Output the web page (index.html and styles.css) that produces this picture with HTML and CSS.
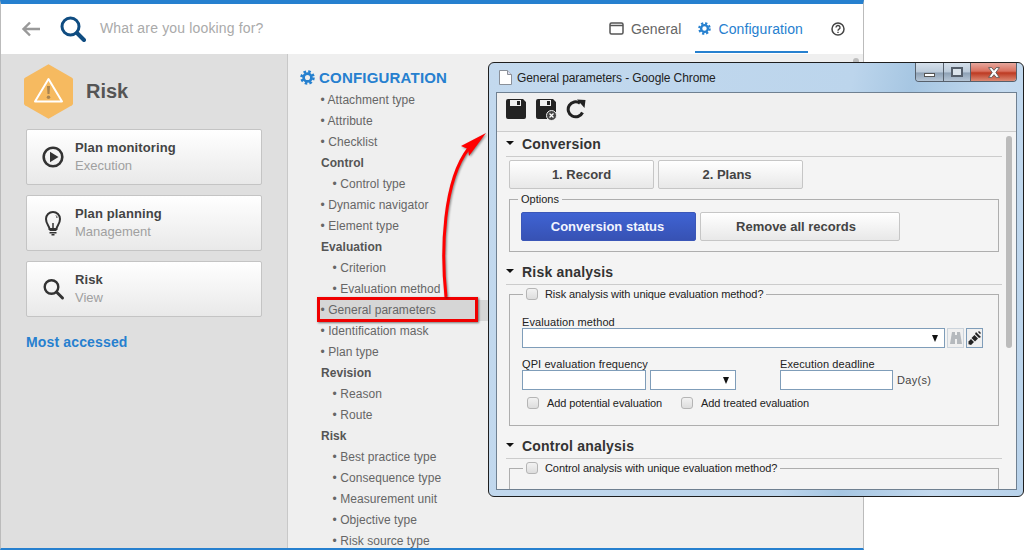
FILE: index.html
```html
<!DOCTYPE html>
<html lang="en">

<head>
    <meta charset="UTF-8">
    <title>General parameters</title>
    <link rel="stylesheet" href="styles.css">
</head>

<body>
    <svg class="defs" width="0" height="0">
        <symbol id="gear" viewBox="0 0 20 20">
            <circle cx="10" cy="10" r="5.2" fill="none" stroke="currentColor" stroke-width="3.6" />
            <circle cx="10" cy="10" r="8" fill="none" stroke="currentColor" stroke-width="3.4" stroke-dasharray="3.4 2.88" />
        </symbol>
        <symbol id="floppy" viewBox="0 0 20 20">
            <path fill="#222" fill-rule="evenodd" d="M2 0h15l3 3v15a2 2 0 0 1-2 2H2a2 2 0 0 1-2-2V2a2 2 0 0 1 2-2zM4 1v6h11V1zM11 2h3v4h-3z" />
        </symbol>
    </svg>

    <div class="app">
        <header class="topbar">
            <svg class="back-icon" width="20" height="16" viewBox="0 0 20 16">
                <path d="M19 8H3M9 1.5L2.5 8 9 14.500" fill="none" stroke="#999" stroke-width="2.4" />
            </svg>
            <svg class="search-icon" width="26" height="26" viewBox="0 0 26 26">
                <circle cx="10.500" cy="10.500" r="8.500" fill="none" stroke="#0f4c81" stroke-width="3" />
                <path d="M17 17l7 7" stroke="#0f4c81" stroke-width="4" stroke-linecap="round" />
            </svg>
            <span class="search-text">What are you looking for?</span>
            <nav class="tabs">
                <a class="tab">
                    <svg width="15" height="13" viewBox="0 0 15 13">
                        <rect x="1" y="1" width="13" height="11" rx="1.500" fill="none" stroke="#555" stroke-width="1.500" />
                        <path d="M1 3.500h13" stroke="#555" stroke-width="1.500" />
                    </svg>
                    General
                </a>
                <a class="tab tab-active">
                    <svg width="13" height="13"><use href="#gear" /></svg>
                    Configuration
                </a>
            </nav>
            <svg class="help-icon" width="14" height="14" viewBox="0 0 14 14">
                <circle cx="7" cy="7" r="6" fill="none" stroke="#444" stroke-width="1.500" />
                <path d="M5 5.500a2 2 0 1 1 3 1.700c-.7.400-1 .7-1 1.500" fill="none" stroke="#444" stroke-width="1.400" />
                <path d="M6.300 9.700h1.400v1.400H6.300z" fill="#444" />
            </svg>
        </header>

        <div class="main">
            <aside class="sidebar">
                <div class="module">
                    <svg width="50" height="55" viewBox="0 0 50 55">
                        <path d="M24.500.300L48 13.800a2 2 0 0 1 1 1.700v24a2 2 0 0 1-1 1.700L24.500 54.700 1 41.200a2 2 0 0 1-1-1.700v-24a2 2 0 0 1 1-1.700z" fill="#f6ba60" />
                        <path d="M24.500 15L38 37.500H11z" fill="none" stroke="#fff" stroke-width="2" stroke-linejoin="round" />
                        <path d="M23 22h3l-.5 8h-2z" fill="#a98450" />
                        <circle cx="24.500" cy="33.200" r="1.800" fill="#a98450" />
                    </svg>
                    <span class="module-name">Risk</span>
                </div>

                <a class="card">
                    <svg width="24" height="24" viewBox="0 0 24 24">
                        <circle cx="12" cy="12" r="9.300" fill="none" stroke="#333" stroke-width="2.600" />
                        <path d="M9 6.800L17.500 12 9 17.200z" fill="#333" />
                    </svg>
                    <span class="card-text"><b>Plan monitoring</b><small>Execution</small></span>
                </a>
                <a class="card">
                    <svg width="24" height="28" viewBox="0 0 24 28">
                        <path d="M8.500 20c0-3-3.500-4.500-3.500-10a7 7 0 0 1 14 0c0 5.500-3.500 7-3.500 10z" fill="none" stroke="#333" stroke-width="2" />
                        <path d="M12 20v-6" stroke="#333" stroke-width="1.500" />
                        <path d="M15 6.500a3 3 0 0 1 1 2.500" fill="none" stroke="#333" />
                        <path d="M8.500 20.500h7v1.500h-7zM8.500 23h7v1.500h-7zM10.500 25h3v1.500h-3z" fill="#333" />
                    </svg>
                    <span class="card-text"><b>Plan planning</b><small>Management</small></span>
                </a>
                <a class="card">
                    <svg width="24" height="24" viewBox="0 0 24 24">
                        <circle cx="10.500" cy="10" r="6.800" fill="none" stroke="#333" stroke-width="2.400" />
                        <path d="M15.500 15l6 6" stroke="#333" stroke-width="3" stroke-linecap="round" />
                    </svg>
                    <span class="card-text"><b>Risk</b><small>View</small></span>
                </a>

                <a class="most-accessed">Most accessed</a>
            </aside>

            <section class="content">
                <h1 class="content-title">
                    <svg width="15" height="15"><use href="#gear" /></svg>
                    CONFIGURATION
                </h1>
                <ul class="menu">
                    <li>• Attachment type</li>
                    <li>• Attribute</li>
                    <li>• Checklist</li>
                    <li class="group">Control</li>
                    <li class="sub">• Control type</li>
                    <li>• Dynamic navigator</li>
                    <li>• Element type</li>
                    <li class="group">Evaluation</li>
                    <li class="sub">• Criterion</li>
                    <li class="sub">• Evaluation method</li>
                    <li class="selected">• General parameters</li>
                    <li>• Identification mask</li>
                    <li>• Plan type</li>
                    <li class="group">Revision</li>
                    <li class="sub">• Reason</li>
                    <li class="sub">• Route</li>
                    <li class="group">Risk</li>
                    <li class="sub">• Best practice type</li>
                    <li class="sub">• Consequence type</li>
                    <li class="sub">• Measurement unit</li>
                    <li class="sub">• Objective type</li>
                    <li class="sub">• Risk source type</li>
                </ul>
                <div class="scroll-thumb"></div>
            </section>
        </div>
    </div>

    <!-- annotations drawn over the screenshot -->
    <div class="callout-box"></div>
    <svg class="callout-arrow" width="60" height="180" viewBox="0 0 60 180">
        <path d="M7 171C2 125 4 55 30 22" fill="none" stroke="#f00" stroke-width="3" />
        <path d="M47 7L22 20l7 3 1 7z" fill="#f00" />
    </svg>

    <div class="dialog">
        <div class="titlebar">
            <svg width="13" height="15" viewBox="0 0 13 15">
                <path d="M.5.500h8l4 4v10H.500z" fill="#fff" stroke="#8a9099" />
                <path d="M8.500.500v4h4" fill="#dde" stroke="#8a9099" />
            </svg>
            <span class="titlebar-text">General parameters - Google Chrome</span>
            <div class="win-buttons">
                <span class="win-btn win-min"><i></i></span>
                <span class="win-btn win-max"><i></i></span>
                <span class="win-btn win-close">
                    <svg width="16" height="13" viewBox="0 0 14 12">
                        <path d="M2 1.500h3L7 4l2-2.500h3L8.700 6 12 10.500H9L7 8l-2 2.500H2L5.300 6z" fill="#fff" stroke="#555" stroke-width=".8" />
                    </svg>
                </span>
            </div>
        </div>

        <div class="client">
            <div class="toolbar">
                <svg width="20" height="20"><use href="#floppy" /></svg>
                <span class="save-close">
                    <svg width="20" height="20"><use href="#floppy" /></svg>
                    <svg class="save-badge" width="11" height="11" viewBox="0 0 11 11">
                        <circle cx="5.500" cy="5.500" r="5" fill="#444" stroke="#f0f0f0" />
                        <path d="M3.500 3.500l4 4M7.500 3.500l-4 4" stroke="#fff" stroke-width="1.300" />
                    </svg>
                </span>
                <svg width="20" height="20" viewBox="0 0 20 20">
                    <path d="M16.500 13.500A7.500 7.500 0 1 1 14 4.200" fill="none" stroke="#222" stroke-width="3" />
                    <path d="M11 .500L19.500 1l-1 8z" fill="#222" />
                </svg>
            </div>

            <div class="form">
                <div class="section-head"><i class="caret"></i>Conversion</div>
                <div class="step-row">
                    <button class="btn step">1. Record</button>
                    <button class="btn step step-plans">2. Plans</button>
                </div>
                <fieldset class="box">
                    <legend>Options</legend>
                    <div class="option-row">
                        <button class="btn btn-primary">Conversion status</button>
                        <button class="btn btn-wide">Remove all records</button>
                    </div>
                </fieldset>

                <div class="section-head"><i class="caret"></i>Risk analysis</div>
                <fieldset class="box box-tall">
                    <legend class="legend-check"><i class="check"></i>Risk analysis with unique evaluation method?</legend>
                    <label class="field-label">Evaluation method</label>
                    <div class="method-row">
                        <div class="input input-method"><i class="select-arrow"></i></div>
                        <span class="tool-btn tool-off">
                            <svg width="14" height="14" viewBox="0 0 14 14">
                                <path d="M3 1h3v3h2V1h3l2 12H8V8H6v5H1z" fill="#b5b9bd" />
                            </svg>
                        </span>
                        <span class="tool-btn">
                            <svg width="15" height="15" viewBox="0 0 15 15">
                                <path d="M9 1l5 5-2 1-4-4z" fill="#222" />
                                <path d="M7.500 4l3.500 3.500-3 3-3.500-3.500z" fill="#222" />
                                <path d="M4 8l3 3-3 3-3-1 1-1-1-1z" fill="#222" />
                                <path d="M11 1l1-1 2 2-1 1z" fill="#222" />
                            </svg>
                        </span>
                    </div>
                    <div class="freq-row">
                        <div class="freq-col">
                            <label class="field-label">QPI evaluation frequency</label>
                            <div class="freq-inputs">
                                <div class="input input-freq"></div>
                                <div class="input input-unit"><i class="select-arrow"></i></div>
                            </div>
                        </div>
                        <div class="freq-col">
                            <label class="field-label">Execution deadline</label>
                            <div class="deadline">
                                <div class="input input-deadline"></div>
                                <span class="days">Day(s)</span>
                            </div>
                        </div>
                    </div>
                    <div class="check-row">
                        <span class="check-item"><i class="check"></i>Add potential evaluation</span>
                        <span class="check-item"><i class="check"></i>Add treated evaluation</span>
                    </div>
                </fieldset>

                <div class="section-head"><i class="caret"></i>Control analysis</div>
                <fieldset class="box box-tall">
                    <legend class="legend-check"><i class="check"></i>Control analysis with unique evaluation method?</legend>
                </fieldset>

                <div class="form-scroll"></div>
            </div>
        </div>
    </div>
</body>

</html>
```

FILE: styles.css
```css
:root {
    --blue: #2680cf;
    --text-gray: #666666;
    --win-text: #222222;
    --field-border: #7f9db9;
}

* {
    box-sizing: border-box;
}

html,
body {
    height: 100%;
}

body {
    margin: 0;
    background-color: #ffffff;
    font-family: 'Liberation Sans', Arial, sans-serif;
    overflow: hidden;
    position: relative;
}

.defs {
    position: absolute;
}

.app {
    width: 864px;
    height: 550px;
    display: flex;
    flex-direction: column;
    border-top: 4px solid var(--blue);
    border-bottom: 2px solid var(--blue);
    border-left: 1px solid #bbbbbb;
    border-right: 1px solid #bbbbbb;
}

/* top bar */
.topbar {
    height: 50px;
    flex: none;
    display: flex;
    align-items: center;
    background-color: #ffffff;
}

.back-icon {
    margin-left: 20px;
}

.search-icon {
    margin-left: 19px;
}

.search-text {
    margin: 0 0 2px 14px;
    font-size: 14px;
    letter-spacing: 0.16px;
    color: #aaaaaa;
}

.tabs {
    display: flex;
    margin-left: auto;
    height: 100%;
}

.tab {
    display: flex;
    align-items: center;
    gap: 7px;
    height: 49px;
    padding: 0 5px 0 3px;
    font-size: 14px;
    letter-spacing: 0.1px;
    color: #666666;
    margin-left: 9px;
}

.tab-active {
    padding-top: 2px;
    color: var(--blue);
    border-bottom: 2px solid var(--blue);
}

.help-icon {
    margin-left: 23px;
    margin-right: 18px;
}

.main {
    flex: 1;
    display: flex;
    min-height: 0;
}

/* left column */
.sidebar {
    width: 287px;
    flex: none;
    padding: 10px 0 0 25px;
    background-color: #dfdfdf;
    border-right: 1px solid #c8c8c8;
}

.module {
    display: flex;
    align-items: center;
    margin-left: -2px;
    height: 55px;
    gap: 12px;
    margin-bottom: 10px;
}

.module-name {
    font-size: 20px;
    font-weight: bold;
    color: #555555;
}

.card {
    display: flex;
    align-items: center;
    width: 236px;
    height: 56px;
    margin-bottom: 10px;
    padding-left: 14px;
    gap: 10px;
    background: linear-gradient(#ffffff, #e9e9e9);
    border: 1px solid #c4c4c4;
    border-radius: 2px;
}

.card svg {
    flex: none;
}

.card-text {
    display: flex;
    flex-direction: column;
    gap: 3px;
    padding-bottom: 2px;
}

.card-text b {
    font-size: 13px;
    letter-spacing: 0.13px;
    color: #444444;
}

.card-text small {
    font-size: 13px;
    color: #a0a0a0;
}

.most-accessed {
    display: block;
    margin-top: 17px;
    font-size: 14px;
    font-weight: bold;
    letter-spacing: 0.15px;
    color: var(--blue);
}

/* configuration list */
.content {
    flex: 1;
    min-width: 0;
    overflow: hidden;
    background-color: #efefef;
    position: relative;
    padding-top: 14px;
}

.content-title {
    display: flex;
    align-items: center;
    gap: 4px;
    height: 18px;
    margin: 0 0 4px 12px;
    font-size: 15px;
    font-weight: bold;
    letter-spacing: 0.2px;
    color: var(--blue);
}

.menu {
    list-style: none;
    margin: 0;
    padding: 0 0 0 29px;
}

.menu li {
    height: 21px;
    line-height: 21px;
    margin-left: 3.6px;
    font-size: 12px;
    letter-spacing: 0.05px;
    color: var(--text-gray);
}

.menu .group {
    margin-left: 4px;
    font-weight: bold;
    color: #555555;
}

.menu .sub {
    padding-left: 12px;
}

.menu .selected {
    margin-left: 0;
    padding-left: 3.6px;
    background-color: #d6d6d6;
}

.scroll-thumb {
    position: absolute;
    right: 4px;
    top: 4px;
    width: 6px;
    height: 140px;
    border-radius: 3px;
    background-color: #bdbdbd;
}

/* red annotation */
.callout-box {
    position: absolute;
    left: 317px;
    top: 297px;
    width: 161px;
    height: 25px;
    border: 3px solid #f00000;
    box-shadow: 1px 1px 2px rgba(0, 0, 0, 0.5);
}

.callout-arrow {
    position: absolute;
    left: 439px;
    top: 126px;
    filter: drop-shadow(1px 1px 1px rgba(0, 0, 0, 0.45));
}

/* popup window */
.dialog {
    position: absolute;
    left: 488px;
    top: 62px;
    width: 536px;
    height: 435px;
    display: flex;
    flex-direction: column;
    padding: 0 6px 6px 7px;
    border: 1px solid #1e1e1e;
    border-radius: 6px;
    background: linear-gradient(100deg, #c3d9ee 0%, #bcd5ec 60%, #a6c6e2 70%, #c4daef 85%, #b8d2ea 100%);
}

.titlebar {
    height: 29px;
    flex: none;
    display: flex;
    align-items: center;
    padding-left: 3px;
    gap: 5px;
}

.titlebar-text {
    font-size: 12px;
    letter-spacing: -0.1px;
    color: var(--win-text);
    margin-top: 1px;
}

.win-buttons {
    display: flex;
    align-self: flex-start;
    margin-left: auto;
    height: 19px;
    border: 1px solid #56606c;
    border-top: none;
    border-radius: 0 0 4px 4px;
    overflow: hidden;
}

.win-btn {
    display: flex;
    align-items: center;
    justify-content: center;
    height: 100%;
    background: linear-gradient(#d5e0eb 0%, #bccbda 50%, #8ea1b5 55%, #b6c6d6 100%);
    border-right: 1px solid #56606c;
}

.win-min {
    width: 28px;
}

.win-min i {
    width: 11px;
    height: 4px;
    margin-top: 5px;
    background-color: #ffffff;
    border: 1px solid #555555;
}

.win-max {
    width: 27px;
}

.win-max i {
    width: 12px;
    height: 10px;
    background-color: #dbe4ec;
    border: 2px solid #555f6b;
}

.win-close {
    width: 45px;
    border-right: none;
    background: linear-gradient(#e6a79d 0%, #d9715f 45%, #bd3a22 55%, #dc8a74 100%);
}

.client {
    flex: 1;
    display: flex;
    flex-direction: column;
    min-height: 0;
    border: 1px solid #6f8091;
    background-color: #f4f4f4;
    overflow: hidden;
}

.toolbar {
    height: 39px;
    flex: none;
    display: flex;
    align-items: center;
    gap: 10px;
    padding: 0 0 7px 9px;
    background-color: #f0f0f0;
    border-bottom: 1px solid #cccccc;
}

.save-close {
    position: relative;
    display: flex;
}

.save-badge {
    position: absolute;
    right: -1px;
    bottom: -2px;
}

.form {
    flex: 1;
    position: relative;
    padding: 0 14px 0 9px;
    overflow: hidden;
}

.section-head {
    display: flex;
    align-items: center;
    height: 25px;
    border-bottom: 1px solid #cccccc;
    font-size: 14px;
    font-weight: bold;
    letter-spacing: 0.2px;
    color: #333333;
}

.caret {
    width: 0;
    height: 0;
    margin: 0 8px 2px 0;
    border-left: 4px solid transparent;
    border-right: 4px solid transparent;
    border-top: 4px solid #111111;
}

.step-row {
    display: flex;
    gap: 4px;
    margin: 3px 0 3px 3px;
}

.btn {
    height: 29px;
    padding: 0;
    font-family: inherit;
    font-size: 13px;
    font-weight: bold;
    color: #444444;
    background: linear-gradient(#ffffff, #e8e8e8);
    border: 1px solid #c6c6c6;
    border-radius: 2px;
}

.step {
    width: 145px;
}

.step-plans {
    padding-right: 7px;
}

.btn-primary {
    width: 175px;
    padding-right: 2px;
    color: #f2f5ff;
    background: linear-gradient(#3f63d3, #3752b4);
    border-color: #3b57b8;
}

.btn-wide {
    width: 200px;
    padding-right: 8px;
}

.box {
    margin: 0 0 8px 3px;
    padding: 0 12px;
    width: 490px;
    height: 60px;
    border: 1px solid #aeaeae;
    border-width: 1px;
    min-width: 0;
}

.box legend {
    height: 14px;
    line-height: 14px;
    margin-left: -4px;
    padding: 0 3px 0 3px;
    font-size: 11px;
    color: var(--win-text);
}

.box .legend-check {
    display: flex;
    align-items: center;
    gap: 7px;
    margin-left: 1px;
    letter-spacing: -0.08px;
}

.option-row {
    display: flex;
    gap: 4px;
    margin: 6px 0 0 -1px;
}

.box-tall {
    height: 139px;
    margin-top: 2px;
}

.check {
    display: block;
    width: 12px;
    height: 12px;
    flex: none;
    border: 1px solid #b5b5b5;
    border-radius: 3px;
    background: linear-gradient(#f2f2f2, #dddddd);
}

.field-label {
    display: block;
    height: 12px;
    line-height: 12px;
    font-size: 11px;
    letter-spacing: 0.1px;
    color: var(--win-text);
}

.box-tall > .field-label {
    margin-top: 15px;
}

.input {
    position: relative;
    height: 20px;
    background-color: #ffffff;
    border: 1px solid var(--field-border);
}

.select-arrow {
    position: absolute;
    right: 6px;
    top: 6px;
    border-left: 3.5px solid transparent;
    border-right: 3.500px solid transparent;
    border-top: 7px solid #111111;
}

.method-row {
    display: flex;
    gap: 2px;
}

.input-method {
    width: 423px;
}

.tool-btn {
    display: flex;
    align-items: center;
    justify-content: center;
    width: 17px;
    height: 20px;
    margin-left: -1px;
    margin-right: 1px;
    border: 1px solid var(--field-border);
    background-color: #f0f0f0;
}

.tool-off {
    border-color: #ccd4dc;
    margin-left: 0;
}

.freq-row {
    display: flex;
    margin-top: 10px;
}

.freq-col {
    flex: none;
    width: 258px;
}

.freq-col + .freq-col {
    width: 160px;
}

.freq-inputs,
.deadline {
    display: flex;
    align-items: center;
    gap: 4px;
}

.input-freq {
    width: 124px;
}

.input-unit {
    width: 86px;
}

.input-deadline {
    width: 113px;
}

.days {
    font-size: 11px;
    letter-spacing: 0.3px;
    color: #444444;
}

.check-row {
    display: flex;
    gap: 19px;
    margin: 6px 0 0 5px;
}

.check-item {
    display: flex;
    align-items: center;
    gap: 8px;
    height: 14px;
    font-size: 11px;
    letter-spacing: -0.1px;
    color: var(--win-text);
}

.form-scroll {
    position: absolute;
    left: 509px;
    top: 4px;
    width: 6px;
    height: 212px;
    border-radius: 3px;
    background-color: #bbbbbb;
}
```
